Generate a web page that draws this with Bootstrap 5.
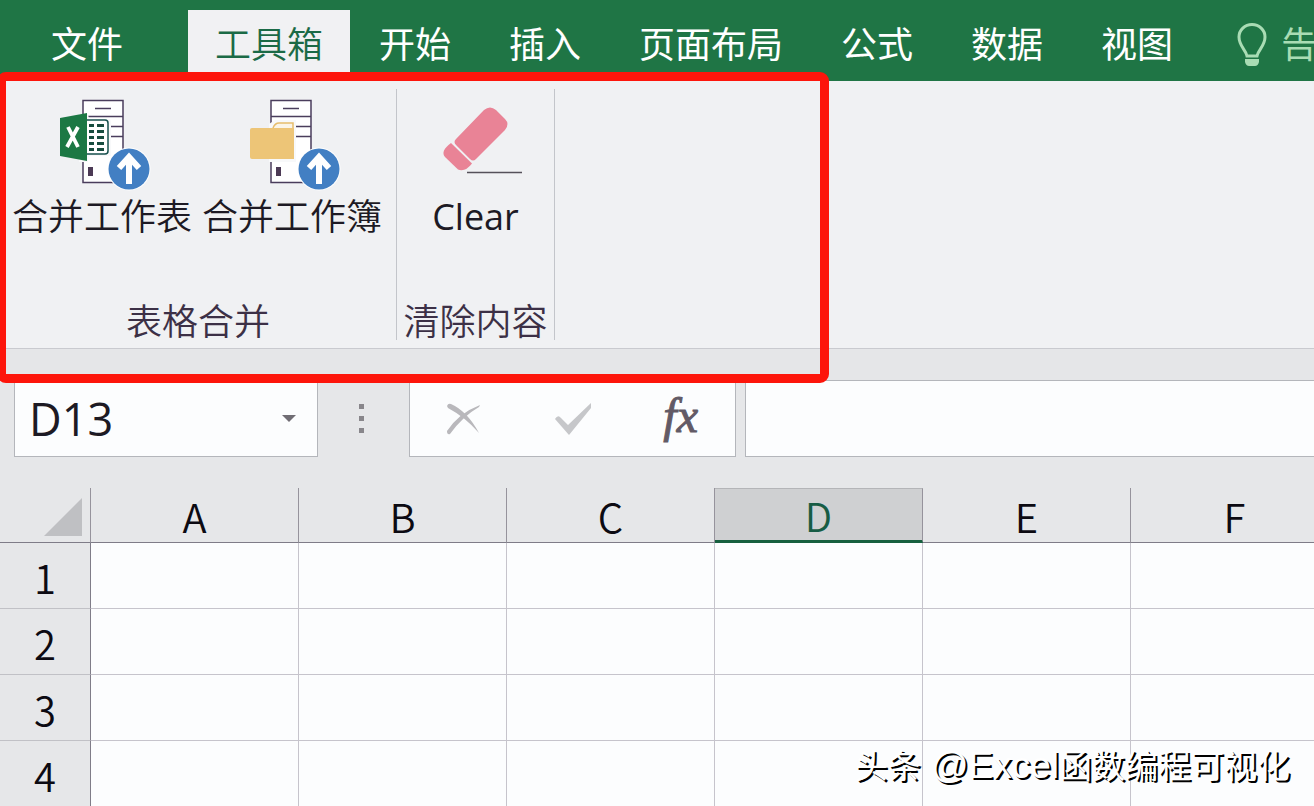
<!DOCTYPE html>
<html lang="zh-CN">
<head>
<meta charset="utf-8">
<meta name="viewport" content="width=device-width, initial-scale=1">
<title>工具箱</title>
<link href="https://cdn.jsdelivr.net/npm/bootstrap@5.3.0/dist/css/bootstrap.min.css" rel="stylesheet">
<style>
  body { background: #e6e7e9; color: #1d1a24; font-family: "Open Sans", "Noto Sans CJK SC", sans-serif; font-size: 36px; line-height: 48px; }
  .tabs-bar { background: #1f7545; height: 81px; padding: 10px 0 9px 22px; }
  .tabs-bar .nav-link { color: #fff; padding: 11px 29px 3px; white-space: nowrap; border-radius: 0; }
  .tabs-bar .nav-link.active { background: #f1f1f3; color: #1b6a46; padding: 11px 27px 3px; margin-left: 36px; font-weight: 350; }
  .tabs-bar .tell-me { color: #a9dcb4; padding-left: 35px; gap: 14px; }
  .ribbon { background: #f0f1f3; height: 268px; padding: 8px 0; border-bottom: 1px solid #c9cacf; }
  .ribbon-group { border-right: 1px solid #c3c5ca; }
  .group-main { width: 397px; }
  .group-clear { width: 158px; }
  .group-buttons { padding-left: 7px; }
  .ribbon-btn { background: none; border: 0; color: inherit; padding: 6px 5px 0; line-height: 48px; white-space: nowrap; }
  .ribbon-btn svg { display: block; margin: 0 auto; overflow: visible; }
  .ribbon-btn .caption { display: block; font-weight: 350; }
  .ribbon-btn .caption-latin { display: block; }
  .group-label { color: #3c3046; line-height: 36px; font-weight: 350; }
  .strip { height: 31px; background: #e5e6e8; }
  .marker { position: absolute; top: -9px; left: -3px; width: 832px; height: 311px; border: 9px solid #fd150b; border-radius: 9px; pointer-events: none; }
  .formula-row { height: 77px; padding-left: 14px; }
  .field-box { background: #fcfdfe; border: 1px solid #b4b6bb; }
  .name-box { width: 304px; padding-right: 21px; }
  .name-box input { font-size: 45px; line-height: 60px; background: none; border: 0; width: 240px; padding: 0 0 0 14px; color: inherit; outline: 0; }
  .plain-btn { background: none; border: 0; padding: 0; line-height: 0; }
  .dots { width: 91px; padding-right: 4px; }
  .tools-box { width: 327px; margin-right: 9px; padding: 0 37px 0 36px; }
  .fx { font: italic 48px/60px "Liberation Serif", serif; color: #625a66; padding-bottom: 6px; -webkit-text-stroke: 1px #625a66; }
  .formula-input { border-right: 0; border-radius: 0; min-width: 0; outline: 0; }
  .sheet { width: 1339px; table-layout: fixed; border-collapse: separate; border-spacing: 0; margin-top: 31px; font-family: "Noto Sans CJK SC", sans-serif; font-size: 40px; color: #0c0a12; }
  .sheet th { font-weight: 350; text-align: center; padding: 0; }
  .sheet thead th { height: 55px; line-height: 50px; padding-top: 3px; border-right: 1px solid #96939c; border-bottom: 1px solid #7f7c88; vertical-align: top; }
  .sheet thead th.picked { background: #cfd0d2; color: #175c45; border-bottom: 3px solid #17603f; border-top: 1px solid #b4b5b8; padding-top: 1px; }
  .sheet thead .select-all { padding-top: 10px; }
  .sheet tbody th { height: 66px; line-height: 60px; padding-top: 3px; border-right: 1px solid #7f7c88; border-bottom: 1px solid #c1c1c6; }
  .sheet td { background: #fcfdfe; border-right: 1px solid #c6c4cc; border-bottom: 1px solid #c6c4cc; padding: 0; }
  .sheet .row-head { width: 91px; }
  .credit { position: absolute; right: 24px; bottom: 16px; font-family: "Noto Sans CJK SC", sans-serif; font-size: 33px; color: #fff; text-shadow: 2px 2px 0 #000; white-space: nowrap; }
  .credit-latin { font-family: "Liberation Sans", sans-serif; font-size: 37px; }
</style>
</head>
<body>
<div class="vh-100 overflow-hidden position-relative">
  <nav class="tabs-bar overflow-hidden">
    <div class="nav flex-nowrap">
      <a class="nav-link" href="#">文件</a>
      <a class="nav-link active" href="#" aria-current="page">工具箱</a>
      <a class="nav-link" href="#">开始</a>
      <a class="nav-link" href="#">插入</a>
      <a class="nav-link" href="#">页面布局</a>
      <a class="nav-link" href="#">公式</a>
      <a class="nav-link" href="#">数据</a>
      <a class="nav-link" href="#">视图</a>
      <a class="nav-link tell-me d-flex align-items-center" href="#">
        <svg class="flex-shrink-0" width="30" height="44" viewBox="0 0 30 44" fill="none" stroke="currentColor" stroke-width="3"><path d="M10 33C9 27 2 23 2 14a13 12.500 0 0 1 26 0C28 23 21 27 20 33Z"/><path d="M8 36h14v3q-1 4-4 4h-6q-3 0-4-4z" fill="currentColor" stroke="none"/></svg>
        <span>告</span>
      </a>
    </div>
  </nav>

  <main class="position-relative">
    <section class="ribbon d-flex" aria-label="工具箱">
      <div class="ribbon-group group-main d-flex flex-column justify-content-between">
        <div class="group-buttons d-flex">
          <button class="ribbon-btn" type="button">
            <svg width="92" height="98" viewBox="-3 1 92 98">
              <path d="M24 6.500h40v82H24z" fill="#fff" stroke="#4a3d5c" stroke-width="1.500"/>
              <path d="M36 14.500h16M24 22.500h40M52 32.500h12M52 42.500h12" stroke="#4a3d5c" stroke-width="1.500"/>
              <path d="M29 73h5v9h-5z" fill="#4c3a55"/>
              <path d="M20 20h9l1 5h19q3 0 3 3v34h-22l-1 6h-9z" fill="#f8f9fa"/>
              <path d="M27 26h19q3 0 3 3v28q0 3-3 3H27z" fill="#fff" stroke="#17504d" stroke-width="1.500"/>
              <path d="M30 31.500h5M38 31.500h7M30 37.500h5M38 37.500h7M30 43.500h5M38 43.500h7M30 49.500h5M38 49.500h7M30 55.500h5M38 55.500h7" stroke="#174c3f" stroke-width="3"/>
              <path d="M1 24l27-5v48L1 62z" fill="#1c7844"/>
              <path d="M9 33L19 53M19 33L8 53" stroke="#fff" stroke-width="3.800"/>
              <circle cx="70" cy="75" r="21.500" fill="#fff"/><circle cx="70" cy="75" r="20.500" fill="#427fc3"/>
              <path d="M70 90V63M60 74l10-11 10 11" fill="none" stroke="#fff" stroke-width="6"/>
            </svg>
            <span class="caption">合并工作表</span>
          </button>
          <button class="ribbon-btn" type="button">
            <svg width="92" height="98" viewBox="-3 1 92 98">
              <path d="M22 6.500h40v82H22z" fill="#fff" stroke="#4a3d5c" stroke-width="1.500"/>
              <path d="M34 14.500h16M22 22.500h40M46 32.500h16M46 42.500h16" stroke="#4a3d5c" stroke-width="1.500"/>
              <path d="M27 73h5v9h-5z" fill="#4c3a55"/>
              <path d="M20 30l6-4h21v42H20z" fill="#f8f9fa"/>
              <path d="M24 34q2-5 6-5h14v6" fill="#fbf5e8" stroke="#e6bd6c" stroke-width="1.500"/>
              <path d="M3 34h42v31H3q-2 0-2-2V36q0-2 2-2z" fill="#edc577"/>
              <circle cx="70" cy="75" r="21.500" fill="#fff"/><circle cx="70" cy="75" r="20.500" fill="#427fc3"/>
              <path d="M70 90V63M60 74l10-11 10 11" fill="none" stroke="#fff" stroke-width="6"/>
            </svg>
            <span class="caption">合并工作簿</span>
          </button>
        </div>
        <div class="group-label text-center">表格合并</div>
      </div>
      <div class="ribbon-group group-clear d-flex flex-column justify-content-between">
        <button class="ribbon-btn" type="button">
          <svg width="92" height="98" viewBox="-13 1 92 98">
            <g fill="#e98396"><path d="M41 16q6-5 12 0l9 9q5 5 0 11L33 65q-3 3-6 0L13 51q-3-3 0-6z"/><path d="M8 49L29 69.500q-7 9-14 6L2 63Q-3 57 8 49z"/></g>
            <path d="M24 78.500h55" stroke="#55515a" stroke-width="1.500"/>
          </svg>
          <span class="caption-latin">Clear</span>
        </button>
        <div class="group-label text-center">清除内容</div>
      </div>
    </section>
    <div class="strip"></div>
    <div class="marker"></div>
  </main>

  <div class="formula-row d-flex">
    <div class="field-box name-box d-flex align-items-center justify-content-between">
      <input type="text" value="D13" aria-label="名称框">
      <button class="plain-btn" type="button" aria-label="展开名称框"><svg width="14" height="8" viewBox="0 0 14 8"><path d="M0 0h14L7 7z" fill="#706d74"/></svg></button>
    </div>
    <div class="dots d-flex align-items-center justify-content-center">
      <svg width="5" height="30" viewBox="0 0 5 30" fill="#88868b"><path d="M0 0h5v5H0zM0 12h5v5H0zM0 24h5v5H0z"/></svg>
    </div>
    <div class="field-box tools-box d-flex align-items-center justify-content-between">
      <button class="plain-btn" type="button" aria-label="取消"><svg width="36" height="34" viewBox="0 0 36 34" fill="#b9b8bc"><path d="M1 4q1-3 4-2Q21 9 33 31 19 15 2 6z"/><path d="M1 29Q13 11 34 3l-1 2Q17 14 4 32q-3 1-3-3z"/></svg></button>
      <button class="plain-btn" type="button" aria-label="输入"><svg width="38" height="34" viewBox="0 0 38 34"><path d="M1 17q3-5 6-1l7 7L37 1v5L15 33z" fill="#c6c7ca"/></svg></button>
      <button class="plain-btn fx" type="button" aria-label="插入函数">fx</button>
    </div>
    <input class="field-box formula-input flex-grow-1" type="text" aria-label="编辑栏">
  </div>

  <table class="sheet">
    <thead>
      <tr><th class="row-head select-all" aria-label="全选"><svg class="d-block ms-auto me-2" width="38" height="38" viewBox="0 0 38 38"><path d="M38 0v38H0z" fill="#bfc0c3"/></svg></th><th scope="col">A</th><th scope="col">B</th><th scope="col">C</th><th scope="col" class="picked">D</th><th scope="col">E</th><th scope="col">F</th></tr>
    </thead>
    <tbody>
      <tr><th scope="row">1</th><td></td><td></td><td></td><td></td><td></td><td></td></tr>
      <tr><th scope="row">2</th><td></td><td></td><td></td><td></td><td></td><td></td></tr>
      <tr><th scope="row">3</th><td></td><td></td><td></td><td></td><td></td><td></td></tr>
      <tr><th scope="row">4</th><td></td><td></td><td></td><td></td><td></td><td></td></tr>
    </tbody>
  </table>
  <div class="credit">头条<span class="credit-latin"> @Excel</span>函数编程可视化</div>
</div>
<script src="https://cdn.jsdelivr.net/npm/bootstrap@5.3.0/dist/js/bootstrap.bundle.min.js"></script>
</body>
</html>
